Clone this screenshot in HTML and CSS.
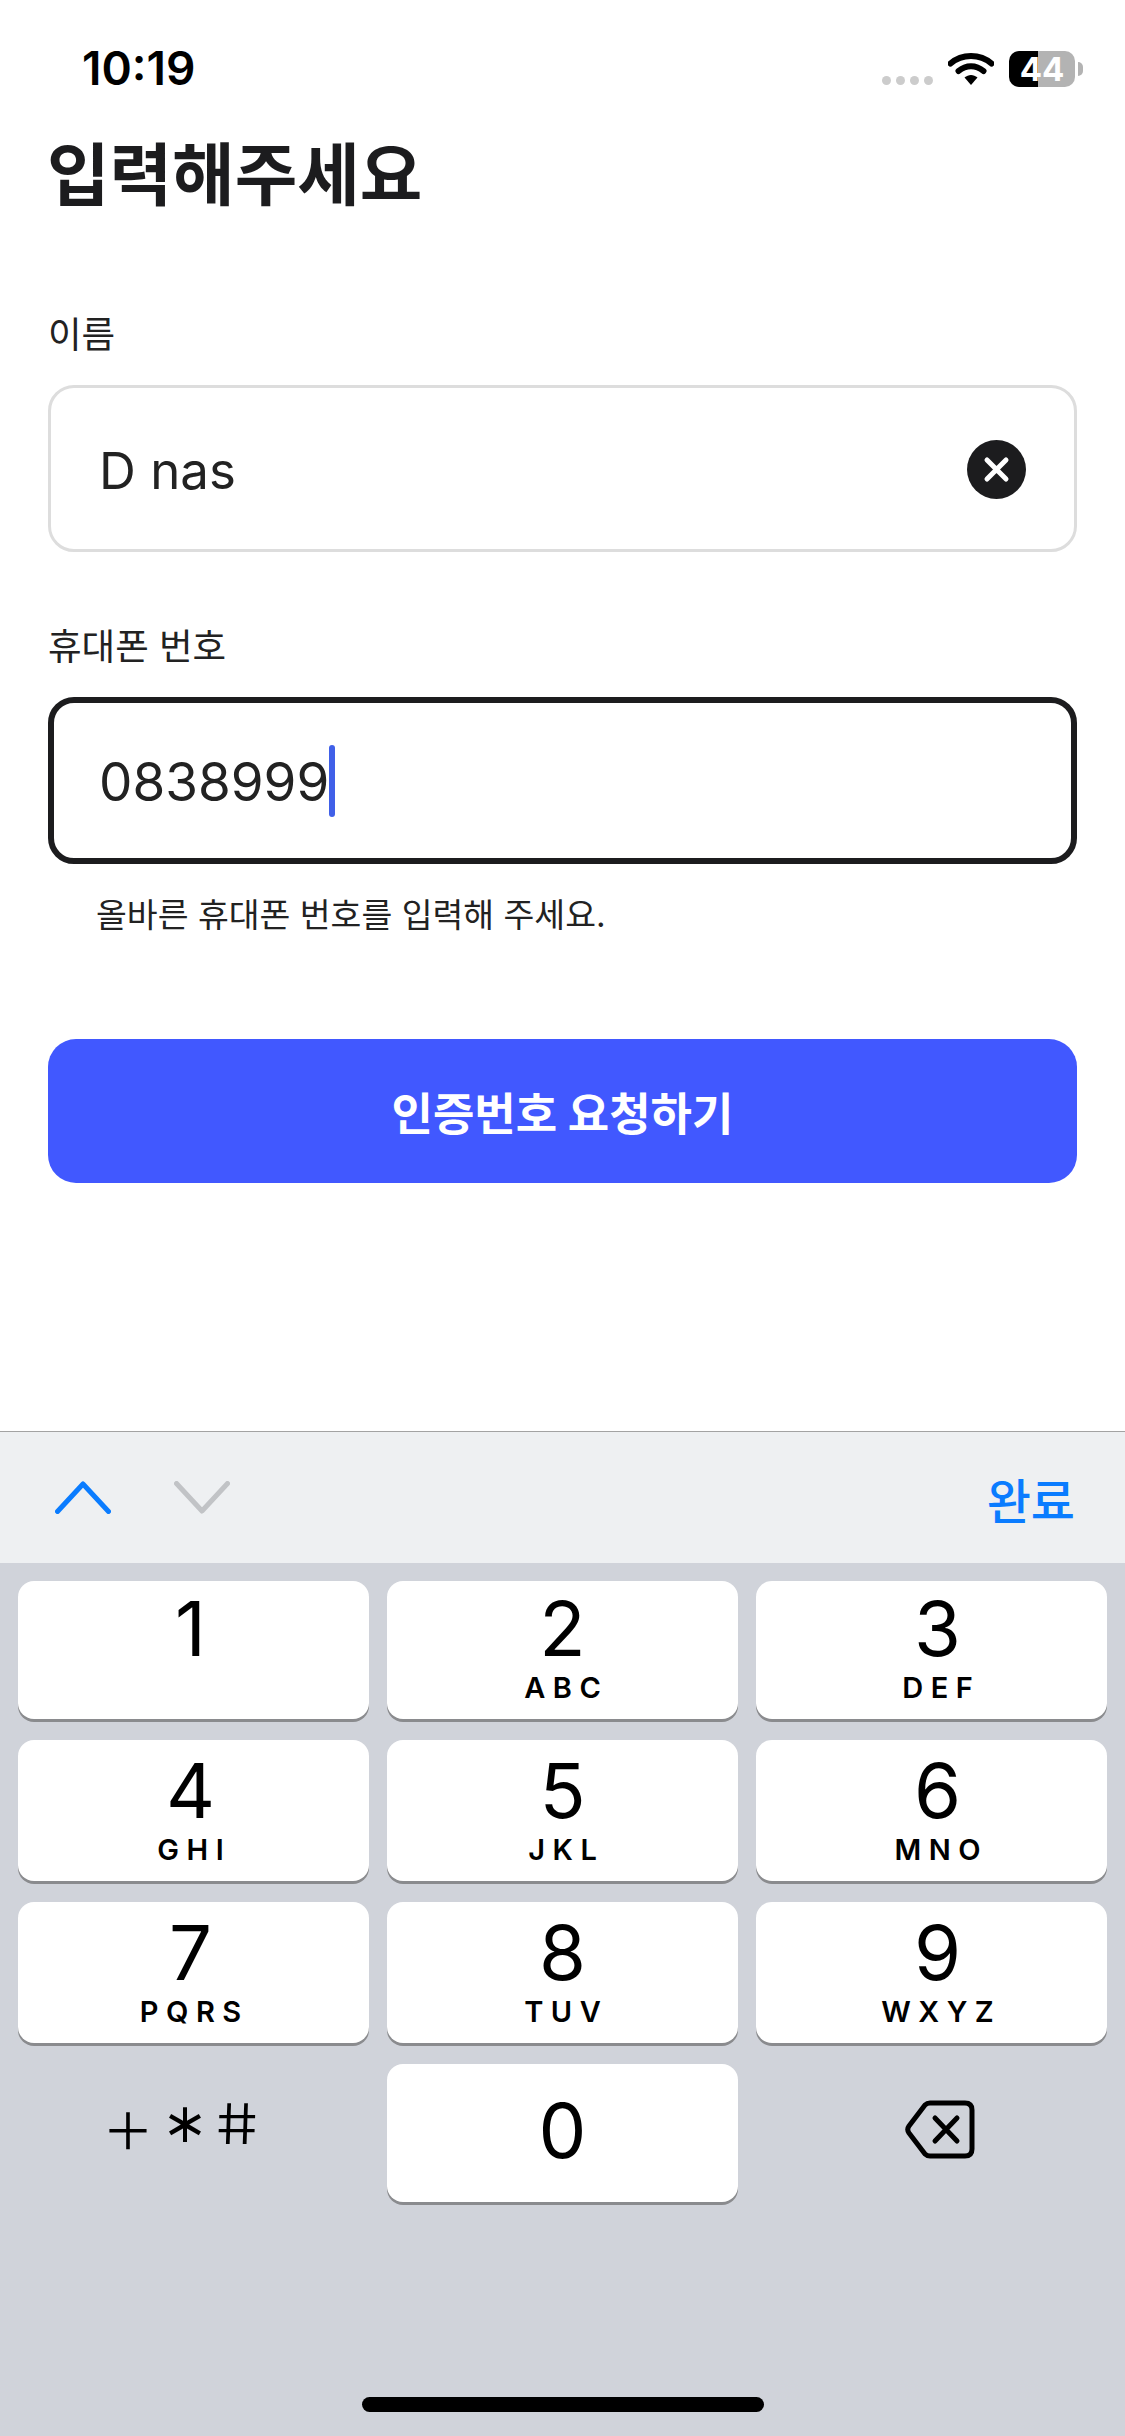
FILE: index.html
```html
<!DOCTYPE html>
<html lang="ko">
<head>
  <meta charset="UTF-8" />
  <meta name="viewport" content="width=device-width, initial-scale=1.0"/>
  <title>입력해주세요</title>
  <link rel="stylesheet" href="styles.css">
</head>
<body>

  <div class="status-bar">
    <span class="time">10:19</span>
    <div class="status-icons">
      <div class="signal"><i></i><i></i><i></i><i></i></div>
      <svg class="wifi" width="46" height="33" viewBox="0 0 46 33">
        <path d="M2.500 11.500C14 1.500 32 1.500 43.500 11.500" fill="none" stroke="#000" stroke-width="6" stroke-linecap="round"/>
        <path d="M10.500 19C18 12.500 28 12.500 35.500 19" fill="none" stroke="#000" stroke-width="6" stroke-linecap="round"/>
        <path d="M16.500 25.500C20.500 22 25.500 22 29.500 25.500L23 33Z" fill="#000"/>
      </svg>
      <div class="battery"><span>44</span></div>
      <div class="battery-nub"></div>
    </div>
  </div>

  <main class="content">
    <h1>입력해주세요</h1>

    <label class="field-label">이름</label>
    <div class="field">
      <span class="field-value">D nas</span>
      <svg class="clear-btn" width="59" height="59" viewBox="0 0 59 59">
        <circle cx="29.500" cy="29.500" r="29.500" fill="#1c1c1e"/>
        <path d="M20 20L39 39M39 20L20 39" stroke="#fff" stroke-width="5" stroke-linecap="round"/>
      </svg>
    </div>

    <label class="field-label label-phone">휴대폰 번호</label>
    <div class="field field-active">
      <span class="field-value phone-value">0838999</span><span class="caret"></span>
    </div>
    <p class="hint">올바른 휴대폰 번호를 입력해 주세요.</p>

    <button class="submit-btn" type="button">인증번호 요청하기</button>
  </main>

  <div class="toolbar">
    <svg class="chevron" width="56" height="33" viewBox="0 0 56 33">
      <path d="M2.500 30.500L28 3L53.500 30.500" fill="none" stroke="#0a7cff" stroke-width="5" stroke-linecap="round" stroke-linejoin="round"/>
    </svg>
    <svg class="chevron chevron-down" width="56" height="33" viewBox="0 0 56 33">
      <path d="M2.500 2.500L28 30L53.500 2.500" fill="none" stroke="#c1c3c6" stroke-width="5" stroke-linecap="round" stroke-linejoin="round"/>
    </svg>
    <span class="done">완료</span>
  </div>

  <div class="keyboard">
    <div class="keys">
      <div class="key key-left"><span class="digit">1</span></div>
      <div class="key"><span class="digit">2</span><span class="letters">ABC</span></div>
      <div class="key key-right"><span class="digit">3</span><span class="letters">DEF</span></div>
      <div class="key key-left key-tall"><span class="digit">4</span><span class="letters">GHI</span></div>
      <div class="key key-tall"><span class="digit">5</span><span class="letters">JKL</span></div>
      <div class="key key-right key-tall"><span class="digit">6</span><span class="letters">MNO</span></div>
      <div class="key key-left key-tall"><span class="digit">7</span><span class="letters">PQRS</span></div>
      <div class="key key-tall"><span class="digit">8</span><span class="letters">TUV</span></div>
      <div class="key key-right key-tall"><span class="digit">9</span><span class="letters">WXYZ</span></div>
      <div class="key key-plain">
        <div class="symbols"><span class="sym-plus">+</span><span class="sym-star">⚹</span><span class="sym-hash">#</span></div>
      </div>
      <div class="key key-zero"><span class="digit">0</span></div>
      <div class="key key-plain">
        <svg class="backspace" width="70" height="59" viewBox="0 0 70 59">
          <path d="M25 3H60Q67 3 67 10V49Q67 56 60 56H25Q22 56 20 54L4 33Q1.500 29.500 4 26L20 5Q22 3 25 3Z" fill="none" stroke="#000" stroke-width="5" stroke-linejoin="round"/>
          <path d="M30 18L52 41M52 18L30 41" stroke="#000" stroke-width="5" stroke-linecap="round"/>
        </svg>
      </div>
    </div>
    <div class="home-bar"></div>
  </div>

</body>
</html>
```

FILE: styles.css
```css
* {
  box-sizing: border-box;
}

body {
  margin: 0;
  width: 1125px;
  height: 2436px;
  display: flex;
  flex-direction: column;
  background: #fff;
  color: #1c1c1e;
  font-family: Inter, "Noto Sans CJK KR", sans-serif;
  overflow: hidden;
}

.status-bar {
  height: 130px;
  padding: 41px 42px 0 82px;
  display: flex;
  justify-content: space-between;
  align-items: flex-start;
}

.time {
  font-size: 46px;
  line-height: 54px;
  font-weight: 600;
  color: #000;
}

.status-icons {
  display: flex;
  align-items: flex-start;
  padding-top: 10px;
}

.signal {
  display: flex;
  gap: 5px;
  margin: 25px 15px 0 0;
}

.signal i {
  width: 9px;
  height: 9px;
  border-radius: 50%;
  background: #ccc;
}

.wifi {
  margin: 1px 15px 0 0;
}

.battery {
  width: 66px;
  height: 36px;
  border-radius: 10px;
  background: linear-gradient(to right, #000 44%, #b3b3b3 44%);
  color: #fff;
  font-size: 33px;
  font-weight: 700;
  line-height: 36px;
  text-align: center;
}

.battery-nub {
  width: 5px;
  height: 14px;
  margin: 11px 0 0 3px;
  border-radius: 0 5px 5px 0;
  background: #b3b3b3;
}

.content {
  flex: 1;
  padding: 0 48px;
}

h1 {
  margin: 0 0 90px -1px;
  font-size: 68px;
  line-height: 90px;
  font-weight: 700;
  color: #1c1c1e;
}

.field-label {
  display: block;
  font-size: 36.500px;
  line-height: 50px;
  margin-bottom: 25px;
  color: #222;
}

.label-phone {
  margin-top: 70px;
}

.field {
  height: 167px;
  display: flex;
  align-items: center;
  padding: 0 48px 0 48px;
  border: 3px solid #ddd;
  border-radius: 26px;
}

.field-value {
  margin-top: 3px;
  font-size: 51px;
  color: #222;
}

.phone-value {
  font-size: 53px;
}

.clear-btn {
  margin: 1px 0 0 auto;
}

.field-active {
  border: 6px solid #1c1c1e;
  padding-left: 45px;
}

.caret {
  width: 6px;
  height: 72px;
  border-radius: 3px;
  background: #4060e8;
}

.hint {
  margin: 28px 0 0 48px;
  font-size: 33.500px;
  line-height: 46px;
  color: #222;
}

.submit-btn {
  display: block;
  width: 100%;
  height: 144px;
  margin-top: 101px;
  border: none;
  border-radius: 28px;
  background: #4158ff;
  color: #fff;
  font-family: inherit;
  font-size: 45px;
  font-weight: 700;
}

.toolbar {
  height: 132px;
  display: flex;
  align-items: center;
  padding: 0 50px 0 55px;
  border-top: 1px solid #a3a3a3;
  background: #eef0f2;
}

.chevron-down {
  margin-left: 63px;
}

.done {
  margin-left: auto;
  font-size: 48px;
  font-weight: 500;
  color: #0a7cff;
}

.keyboard {
  height: 873px;
  padding: 18px 18px 0;
  display: flex;
  flex-direction: column;
  background: #d0d3da;
}

.keys {
  display: grid;
  grid-template-columns: repeat(3, 351px);
  grid-template-rows: 138px 141px 141px 138px;
  gap: 21px 18px;
}

.key {
  display: flex;
  flex-direction: column;
  align-items: center;
  border-radius: 16px;
  background: #fff;
  box-shadow: 0 3px 0 #8a8b8e;
  color: #000;
}

.key-plain {
  background: none;
  box-shadow: none;
}

.key-tall {
  padding-top: 3px;
}

.key-left {
  padding-right: 6px;
}

.key-right {
  padding-left: 12px;
}

.digit {
  font-size: 76px;
  line-height: 88px;
  margin-top: 3px;
}

.key-zero .digit {
  margin-top: 22px;
}

.letters {
  font-size: 29px;
  line-height: 34px;
  font-weight: 600;
  letter-spacing: 7.500px;
  margin-right: -7.500px;
  margin-top: -1px;
}

/* + * # sit on one baseline, glyphs nudged to look like the straight keypad ones */
.symbols {
  display: flex;
  align-items: center;
  justify-content: center;
  gap: 16px;
  height: 60px;
  margin: 30px 0 0 -29px;
  color: #000;
  font-weight: 300;
}

.sym-plus {
  font-size: 86px;
  line-height: 60px;
  font-weight: 200;
}

.sym-star {
  font-family: "DejaVu Sans", sans-serif;
  font-size: 62px;
  line-height: 60px;
  transform: rotate(90deg);
}

.sym-hash {
  margin-left: -9px;
  font-size: 66px;
  line-height: 60px;
  transform: skewX(9deg) scaleY(0.85);
}

.backspace {
  margin: 36px 0 0 16px;
}

.home-bar {
  width: 402px;
  height: 15px;
  margin: auto auto 24px;
  border-radius: 8px;
  background: #000;
}
```
